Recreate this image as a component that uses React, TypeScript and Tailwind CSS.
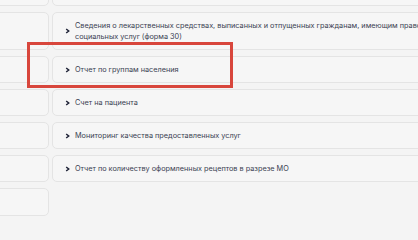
const rows = [
  { lines: [] as string[], h: "h-[27px]" },
  {
    lines: [
      "Сведения о лекарственных средствах, выписанных и отпущенных гражданам, имеющим право на получение набора",
      "социальных услуг (форма 30)",
    ],
    h: "h-[38px]",
  },
  { lines: ["Отчет по группам населения"], h: "h-[27px]" },
  { lines: ["Счет на пациента"], h: "h-[27px]" },
  { lines: ["Мониторинг качества предоставленных услуг"], h: "h-[27px]" },
  { lines: ["Отчет по количеству оформленных рецептов в разрезе МО"], h: "h-[27px]" },
];

function Chevron() {
  return (
    <svg width="5" height="6" viewBox="0 0 5 6" className="shrink-0">
      <path d="M1.2 1 L3.7 3 L1.2 5" fill="none" stroke="#1f2337" strokeWidth="1.5" />
    </svg>
  );
}

export default function App() {
  return (
    <div className="relative w-[418px] h-[240px] overflow-hidden bg-[#f4f4f4] font-['Inter',sans-serif]">
      <div className="ml-[-12px] mt-[-21px] w-[560px] flex flex-col gap-[6px]">
        {rows.map((r, i) => (
          <div key={i} className={`flex gap-[3px] ${r.h}`}>
            <div className="w-[61px] rounded-[5px] border border-[#e4e4e4] bg-[#f6f6f6]" />
            <div className="flex-1 rounded-[5px] border border-[#e4e4e4] bg-[#f6f6f6] flex items-center pl-[12px] gap-[5px]">
              {r.lines.length > 0 && <Chevron />}
              {r.lines.length > 0 && (
                <div className="flex flex-col text-[7.3px] leading-[11px] text-[#3a3e52] whitespace-nowrap">
                  {r.lines.map((l) => (
                    <span key={l}>{l}</span>
                  ))}
                </div>
              )}
            </div>
          </div>
        ))}
        <div className="flex gap-[3px] h-[28px]">
          <div className="w-[61px] rounded-[5px] border border-[#e4e4e4] bg-[#f6f6f6]" />
        </div>
      </div>
      <div className="absolute left-[27px] top-[42px] w-[206px] h-[46px] border-[3px] border-[#d8463c]" />
    </div>
  );
}
